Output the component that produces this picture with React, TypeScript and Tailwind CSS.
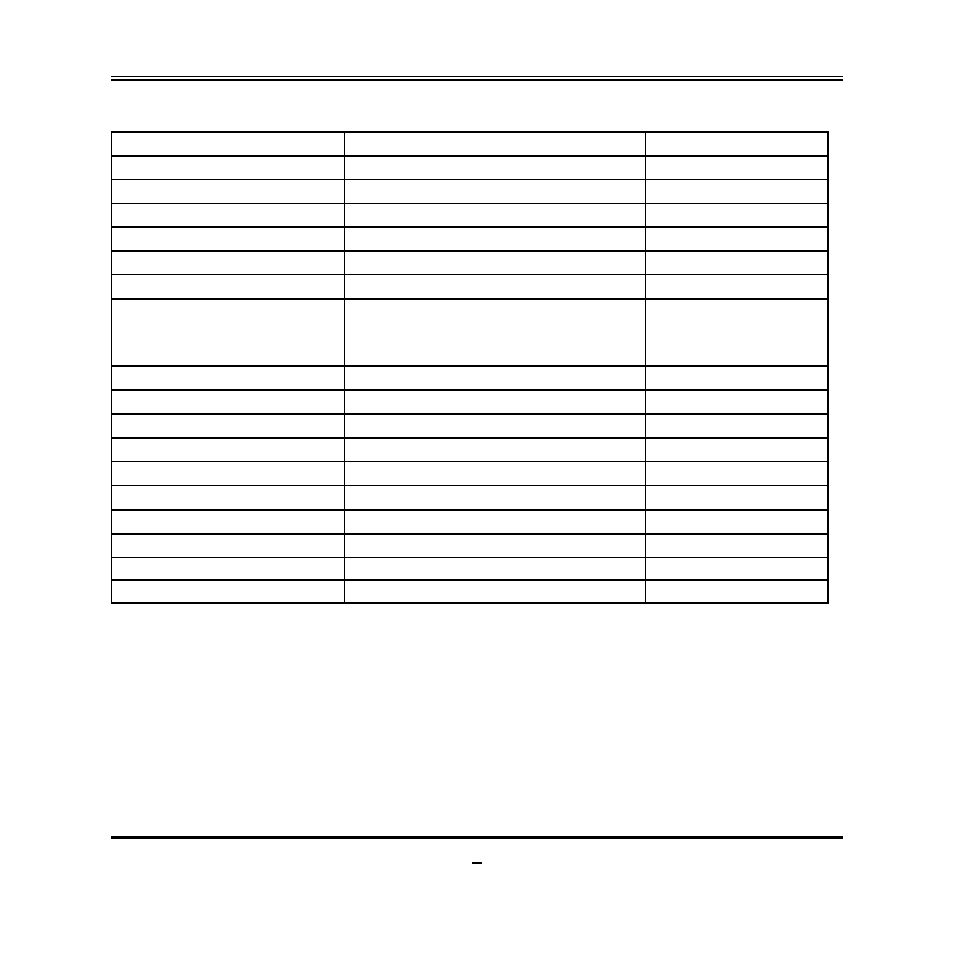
const rows: { h: number; thick: boolean }[] = [
  { h: 24, thick: true },
  { h: 24, thick: true },
  { h: 24, thick: false },
  { h: 23, thick: false },
  { h: 24, thick: true },
  { h: 24, thick: true },
  { h: 24, thick: false },
  { h: 67, thick: true },
  { h: 24, thick: true },
  { h: 24, thick: true },
  { h: 24, thick: true },
  { h: 24, thick: true },
  { h: 24, thick: false },
  { h: 24, thick: false },
  { h: 24, thick: true },
  { h: 24, thick: true },
  { h: 22, thick: false },
  { h: 23, thick: true },
];

function Row({ h, thick }: { h: number; thick: boolean }) {
  return (
    <div
      className={`flex border-black ${thick ? 'border-t-2' : 'border-t'}`}
      style={{ height: h }}
    >
      <div className="w-[232px]" />
      <div className="w-[301px] border-l border-black" />
      <div className="flex-1 border-l border-black" />
    </div>
  );
}

export default function App() {
  return (
    <div className="h-[954px] w-[954px] bg-white font-['Liberation_Sans',sans-serif]">
      <div className="pl-[111px] pt-[76px]">
        {/* Header rule */}
        <div className="h-px w-[732px] bg-black" />
        <div className="mt-[2px] h-[2px] w-[732px] bg-black" />

        {/* Table */}
        <div className="mt-[50px] w-[718px] border-b-2 border-l border-r-2 border-black">
          {rows.map((r, i) => (
            <Row key={i} h={r.h} thick={r.thick} />
          ))}
        </div>

        {/* Footer */}
        <div className="mt-[232px] h-[3px] w-[732px] bg-black" />
        <div className="ml-[361px] mt-[23px] h-[2px] w-[10px] bg-black" />
      </div>
    </div>
  );
}
